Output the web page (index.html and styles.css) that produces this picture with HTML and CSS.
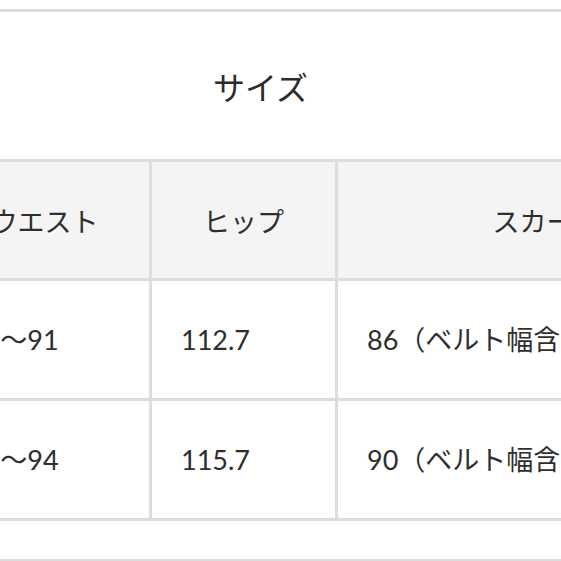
FILE: index.html
```html
<!DOCTYPE html>
<html lang="ja">
<head>
<meta charset="utf-8">
<link rel="stylesheet" href="styles.css">
</head>
<body>
<div class="page">
  <div class="rule rule-top"></div>
  <h2 class="title">サイズ</h2>
  <table class="size-table">
    <colgroup>
      <col class="c1"><col class="c2"><col class="c3">
    </colgroup>
    <thead>
      <tr class="head-row">
        <th>ウエスト</th>
        <th>ヒップ</th>
        <th>スカート丈</th>
      </tr>
    </thead>
    <tbody>
      <tr class="data-row">
        <td>76〜91</td>
        <td>112.7</td>
        <td>86（ベルト幅含む）</td>
      </tr>
      <tr class="data-row">
        <td>79〜94</td>
        <td>115.7</td>
        <td>90（ベルト幅含む）</td>
      </tr>
    </tbody>
  </table>
  <div class="rule rule-bottom"></div>
</div>
</body>
</html>
```

FILE: styles.css
```css
html, body {
  margin: 0;
  padding: 0;
  background: #fff;
}
body {
  width: 561px;
  height: 561px;
  overflow: hidden;
  font-family: Lato, "Noto Sans CJK JP", sans-serif;
  color: #2e2e2e;
}
.page {
  display: flex;
  flex-direction: column;
}
.rule {
  height: 3px;
  background: #dcdcdc;
  width: 100%;
  flex: none;
}
.rule-top {
  margin-top: 9px;
}
.title {
  margin: 0;
  height: 147px;
  flex: none;
  display: flex;
  align-items: center;
  justify-content: center;
  padding-right: 40px;
  font-size: 32px;
  font-weight: 400;
  color: #2b2b2b;
  font-family: "Noto Sans CJK JP", sans-serif;
}
.size-table {
  margin-left: -63px;
  width: 842px;
  flex: none;
  table-layout: fixed;
  border-collapse: separate;
  border-spacing: 3px;
  background: #dcdcdc;
  font-size: 27px;
}
.c1 { width: 209px; }
.c2 { width: 183px; }
.c3 { width: 444px; }
.size-table th,
.size-table td {
  padding: 0;
  white-space: nowrap;
  overflow: hidden;
  font-weight: 400;
  line-height: 1;
}
.size-table th {
  background: #f4f4f4;
  text-align: center;
  height: 116px;
  font-family: "Noto Sans CJK JP", sans-serif;
}
.size-table td {
  background: #fff;
  text-align: left;
  padding-left: 29px;
  height: 117px;
}
.rule-bottom {
  margin-top: 38px;
}
```
